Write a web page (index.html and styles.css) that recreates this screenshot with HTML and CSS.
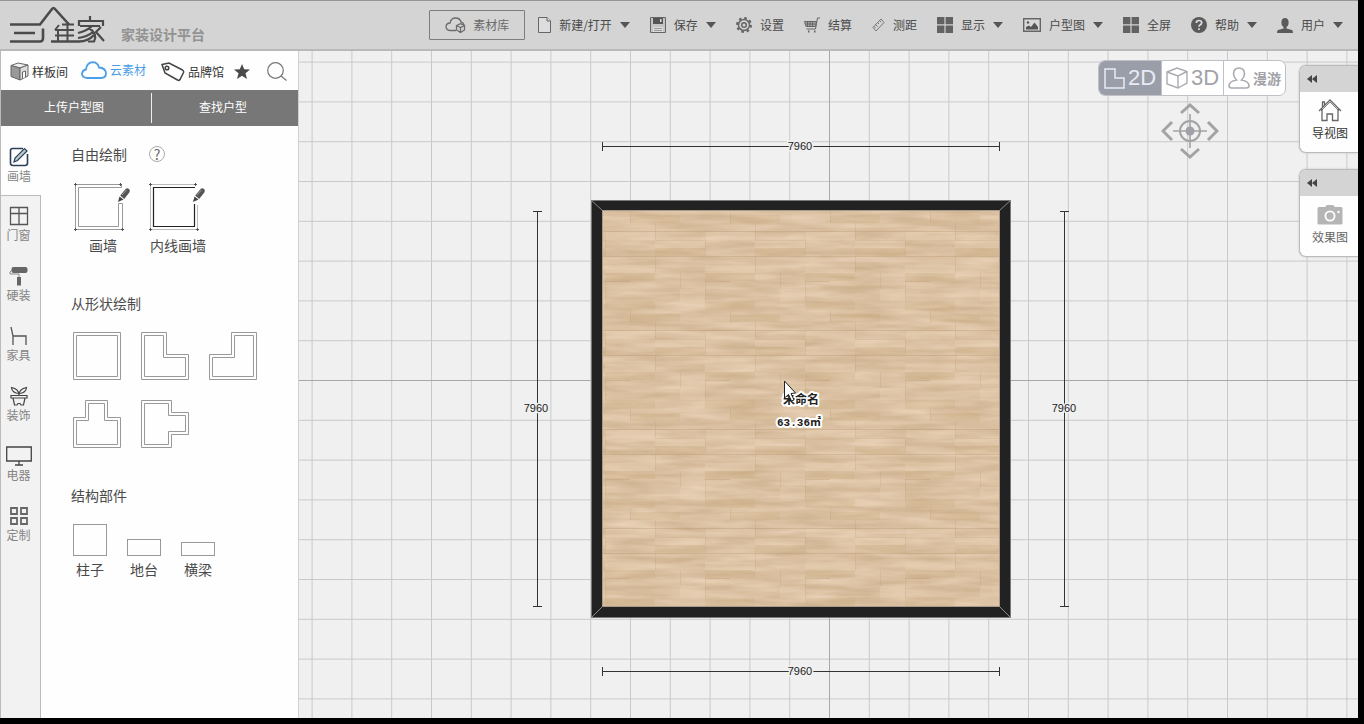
FILE: index.html
```html
<!DOCTYPE html>
<html lang="zh-CN">
<head>
<meta charset="utf-8">
<title>三维家 家装设计平台</title>
<link rel="stylesheet" href="styles.css">
</head>
<body>
<svg class="defs" width="0" height="0" aria-hidden="true">
  <symbol id="caret" viewBox="0 0 10 6"><path d="M0 0H10L5 6Z" fill="#555"/></symbol>
  <symbol id="four" viewBox="0 0 16 16"><path d="M0 0H7.4V7.2H0ZM8.6 0H16V7.2H8.6ZM0 8.6H7.4V16H0ZM8.6 8.6H16V16H8.6Z" fill="#626262"/></symbol>
  <symbol id="rewind" viewBox="0 0 11 8"><path d="M0 4L5 0V8ZM5 4L10 0V8Z" fill="#444"/></symbol>
  <symbol id="pencil" viewBox="0 0 12 14"><path d="M0 14L1.5 8.5L5.5 11.5Z" fill="#444"/><path d="M2.2 7.6L7.6 1Q9.5-.6 11 1Q12.400 2.400 11.300 4.400L6.200 11Z" fill="#555"/><path d="M4 7L8.500 2" stroke="#999"/></symbol>
</svg>
<div class="app">
  <header class="topbar">
    <a class="brand" href="#" aria-label="三维家">
      <svg width="97" height="38" viewBox="0 0 97 38" fill="none" stroke="#4b4b4b" stroke-width="2.600">
        <path d="M1 18.500H31L43 3Q44.500 1 46 3L60 18.500"/>
        <path d="M5 27H26M1 35.500H31Q34 35.500 34 32V22.500"/>
        <path d="M42 35.500H70Q79 35.500 85 29" stroke-width="2.500"/>
        <path d="M53 18.500H65M46 24H65M46 29.500H65M58.500 16V35M50 19L46 24M49 24V35" stroke-width="2"/>
        <path d="M81 10V14M70 20V15H94V20M71 20H91M83 20Q78 25 69 27M80 22Q89 28 85 35.500H79M84 26Q78 31 69 32M92 21L87 26L95 35" stroke-width="2.200"/>
      </svg>
      <span class="slogan">家装设计平台</span>
    </a>
    <nav class="menu">
      <button class="library">
        <svg width="21" height="17" viewBox="0 0 21 17" fill="none" stroke="#6b6b6b" stroke-width="1.300"><path d="M11 13.500H5Q1 13 1 9.500Q1.500 6 5 6Q6 1 10.500 1Q15 1 16 5Q18.500 5.500 19 8"/><path d="M11.500 8.500L15.500 6.700L19.500 8.500V13L15.500 15.500L11.500 13ZM11.500 8.500L15.500 10.500L19.500 8.500M15.500 10.500V15.500"/></svg>
        素材库</button>
      <button class="item first">
        <svg width="13" height="17" viewBox="0 0 13 17" fill="#ddd" stroke="#666"><path d="M.5.5H9L12.500 4V15.500H.5Z"/><path d="M9 .5V4H12.500"/></svg>
        新建/打开<svg class="caret"><use href="#caret"/></svg></button>
      <button class="item">
        <svg width="16" height="16" viewBox="0 0 16 16"><path d="M.5.5H15.500V15.500H.5Z" fill="#c5c5c5" stroke="#666"/><path d="M3 1H13V7H3Z" fill="#555"/><path d="M10 2h1.500v3H10Z" fill="#ddd"/><path d="M3 10H13V15H3Z" fill="#ddd"/><path d="M4 11.500H12M4 13.500H12" stroke="#999"/></svg>
        保存<svg class="caret"><use href="#caret"/></svg></button>
      <button class="item">
        <svg width="16" height="16" viewBox="0 0 16 16" fill="none" stroke="#666"><circle cx="8" cy="8" r="7" stroke-width="2" stroke-dasharray="2.700 2.800"/><circle cx="8" cy="8" r="5.500" stroke-width="1.500"/><circle cx="8" cy="8" r="2.300" stroke-width="1.500"/></svg>
        设置</button>
      <button class="item">
        <svg width="16" height="16" viewBox="0 0 16 16" fill="none" stroke="#666"><path d="M16 1H13.500L11.500 12H2.500"/><path d="M.5 4.500H12.500L11.500 9.500H2Z" fill="#aaa"/><path d="M3.500 5V9M6 5V9M8.500 5V9M1 7H12"/><path d="M4 14.500H5.500M10 14.500H11.500" stroke-width="2"/></svg>
        结算</button>
      <button class="item">
        <svg width="13" height="14" viewBox="0 0 13 14" fill="none" stroke="#777"><path d="M9 1L12 4.500L4 13L1 9.500ZM7.500 2.500L9 4M5.500 4.500L7 6M3.500 6.500L5.500 8.500M2 8.500L3.500 10"/></svg>
        测距</button>
      <button class="item">
        <svg width="16" height="16"><use href="#four"/></svg>
        显示<svg class="caret"><use href="#caret"/></svg></button>
      <button class="item">
        <svg width="18" height="14" viewBox="0 0 18 14"><path d="M.7.7H17.300V13.300H.7Z" fill="#d8d8d8" stroke="#666" stroke-width="1.400"/><path d="M3 11.500V9L6 7.500L8 9L11.500 4.500L15 9V11.500Z" fill="#555"/><circle cx="5" cy="4.500" r="1.200" fill="#555"/></svg>
        户型图<svg class="caret"><use href="#caret"/></svg></button>
      <button class="item">
        <svg width="16" height="16"><use href="#four"/></svg>
        全屏</button>
      <button class="item">
        <svg width="16" height="16" viewBox="0 0 16 16"><circle cx="8" cy="8" r="8" fill="#5a5a5a"/><path d="M5.300 6Q5.300 3.500 8 3.500Q10.700 3.500 10.700 5.700Q10.700 7 9 8Q8 8.500 8 9.800M8 11.200V13" fill="none" stroke="#ddd" stroke-width="1.700"/></svg>
        帮助<svg class="caret"><use href="#caret"/></svg></button>
      <button class="item">
        <svg width="16" height="15" viewBox="0 0 16 15" fill="#5a5a5a"><ellipse cx="8" cy="4.500" rx="3.600" ry="4.500"/><path d="M6.500 8H9.500V10.500L15 12Q16 12.500 16 15H0Q0 12.500 1 12L6.500 10.500Z"/></svg>
        用户<svg class="caret"><use href="#caret"/></svg></button>
    </nav>
  </header>

  <main class="work">
    <aside class="side">
      <nav class="sources">
        <button class="source"><svg width="19" height="19" viewBox="0 0 19 19" stroke="#666"><path d="M1 3.500L8 1L18 3L10 6Z" fill="#eee"/><path d="M1 3.500L10 6V18L1 14.500Z" fill="#999"/><path d="M10 6L18 3V14L10 18Z" fill="#ddd"/><path d="M12.500 16.500V10L15.500 9V15" fill="#fff"/></svg>样板间</button>
        <button class="source cloud"><svg width="26" height="19" viewBox="0 0 26 19" fill="none" stroke="#4b9fe8" stroke-width="1.800"><path d="M6 17Q1 16.500 1 12.500Q1.500 9 5 8.500Q5.500 2 11.500 1.200Q16.500 1.200 18 6.500Q24.500 7 25 12Q25 17 20 17Z"/></svg>云素材</button>
        <button class="source brandhall"><svg width="24" height="20" viewBox="0 0 24 20" fill="none" stroke="#444" stroke-width="1.500"><path d="M1 2.500L8 1L21.500 8Q23 9 22.500 10.500L19 17.500Q18 19 16.500 18L4 11Z"/><circle cx="6" cy="6" r="1.800"/></svg>品牌馆</button>
        <button class="source" aria-label="收藏"><svg width="16" height="15" viewBox="0 0 16 15"><path d="M8 0L10.200 5.200L16 5.500L11.500 9.200L13 15L8 11.700L3 15L4.500 9.200L0 5.500L5.800 5.200Z" fill="#4a4a4a"/></svg></button>
        <button class="source search" aria-label="搜索"><svg width="20" height="19" viewBox="0 0 20 19" fill="none" stroke="#777" stroke-width="1.200"><circle cx="8.500" cy="8.500" r="7.800"/><path d="M14 14L19.500 18.500"/></svg></button>
      </nav>
      <div class="plan-actions">
        <button>上传户型图</button>
        <button>查找户型</button>
      </div>
      <div class="columns">
        <nav class="tools">
          <button class="tool active"><svg width="20" height="20" viewBox="0 0 20 20" fill="none" stroke="#2a4157" stroke-width="1.600"><path d="M14 1.500H3.500Q1.500 1.500 1.500 3.500V16Q1.500 18.500 4 18.500H16Q18.500 18.500 18.500 16V7"/><path d="M5 15L6 11L15.500 1.500L18 4L8.500 13.500Z" fill="#bcc" stroke-width="1.200"/></svg>画墙</button>
          <button class="tool"><svg width="20" height="20" viewBox="0 0 20 20" fill="none" stroke="#555" stroke-width="1.300"><path d="M1.500 1.500H18.500V18.500H1.500ZM10 1.500V18.500M1.500 7.500H18.500"/></svg>门窗</button>
          <button class="tool"><svg width="20" height="20" viewBox="0 0 20 20"><rect x="2.500" y="1" width="16" height="6" rx="2" fill="#666"/><path d="M3 4L1 6V8H10V11" fill="none" stroke="#888"/><path d="M8 11H12V19.500H8Z" fill="#666"/></svg>硬装</button>
          <button class="tool"><svg width="20" height="20" viewBox="0 0 20 20" fill="none" stroke="#555" stroke-width="1.300"><path d="M2 1L4 10V19M4 10H17V19"/></svg>家具</button>
          <button class="tool"><svg width="20" height="20" viewBox="0 0 20 20" fill="none" stroke="#444" stroke-width="1.200"><path d="M10 9Q10 3 2.500 1.500Q3 7 10 7.500Q17 7 17.500 1.500Q10 3 10 9M2 9.500H18V12H2ZM4 12L5.500 19H8L9 17.500H11L12 19H14.500L16 12"/></svg>装饰</button>
          <button class="tool"><svg width="26" height="20" viewBox="0 0 26 20" fill="none" stroke="#444" stroke-width="1.300"><path d="M.7 1H25.300V15H.7ZM13 15V18.500M9 19H17"/></svg>电器</button>
          <button class="tool"><svg width="20" height="20" viewBox="0 0 20 20" fill="none" stroke="#666" stroke-width="1.800"><path d="M2 2H8V8H2ZM12 2H18V8H12ZM2 12H8V18H2ZM12 12H18V18H12Z"/></svg>定制</button>
        </nav>
        <section class="panel">
          <div class="group free">
            <h2>自由绘制 <button class="hint" aria-label="说明">?</button></h2>
            <div class="draws">
              <button class="draw">
                <svg width="58" height="50" viewBox="0 0 58 50" fill="none" stroke="#999"><path d="M47.500 1.500V4.500H4.500V43.500H44.500V20.500H48.500V46.500H1.500V1.500Z"/><path d="M0 1.500H3M1.500 0V3M0 46.500H3M1.500 45V48M47 46.500H50M48.500 45V48M45 1.500H48M46.500 0V3" stroke="#555"/><use href="#pencil" x="44" y="5" width="12" height="14" stroke="none"/></svg>
                画墙</button>
              <button class="draw">
                <svg width="58" height="50" viewBox="0 0 58 50" fill="none" stroke="#bbb"><path d="M46 1.500H1.500V46.500H48.500V22"/><path d="M46 4.500H4.500V43.500H45.500V21" stroke="#222" stroke-width="1.200"/><path d="M0 1.500H3M1.500 0V3M0 46.500H3M1.500 45V48M47 46.500H50M48.500 45V48M45 1.500H48M46.500 0V3" stroke="#555"/><use href="#pencil" x="44" y="5" width="12" height="14" stroke="none"/></svg>
                内线画墙</button>
            </div>
          </div>
          <div class="group shape">
            <h2>从形状绘制</h2>
            <div class="shapes">
              <button aria-label="方形"><svg width="48" height="48" viewBox="0 0 48 48"><path d="M.5.5H47.500V47.500H.5ZM3.500 3.500H44.500V44.500H3.500Z"/></svg></button>
              <button aria-label="L形"><svg width="48" height="48" viewBox="0 0 48 48"><path d="M.5.5H25.500V22.500H47.500V47.500H.5ZM3.500 3.500H22.500V25.500H44.500V44.500H3.500Z"/></svg></button>
              <button aria-label="反L形"><svg width="48" height="48" viewBox="0 0 48 48"><path d="M47.500.5H22.500V22.500H.5V47.500H47.500ZM44.500 3.500H25.500V25.500H3.500V44.500H44.500Z"/></svg></button>
              <button aria-label="凸形"><svg width="48" height="48" viewBox="0 0 48 48"><path d="M12.500.5H34.500V17.500H47.500V47.500H.5V17.500H12.500ZM15.500 3.500H31.500V20.500H44.500V44.500H3.500V20.500H15.500Z"/></svg></button>
              <button aria-label="T形"><svg width="48" height="48" viewBox="0 0 48 48"><path d="M.5.5H30.500V12.500H47.500V34.500H30.500V47.500H.5ZM3.500 3.500H27.500V15.500H44.500V31.500H27.500V44.500H3.500Z"/></svg></button>
            </div>
          </div>
          <div class="group">
            <h2>结构部件</h2>
            <div class="parts">
              <button><span class="part pillar"></span>柱子</button>
              <button><span class="part deck"></span>地台</button>
              <button><span class="part beam"></span>横梁</button>
            </div>
          </div>
        </section>
      </div>
    </aside>

    <section class="stage">
      <svg class="plan" viewBox="299 51 1059 667" preserveAspectRatio="xMidYMid slice">
        <defs>
          <pattern id="grid" x="829" y="380" width="39.800" height="39.800" patternUnits="userSpaceOnUse"><path d="M.5 0V39.800M0 .5H39.800" stroke="#c9c9c9" fill="none"/></pattern>
          <pattern id="planks" x="605" y="211" width="100" height="99" patternUnits="userSpaceOnUse">
            <path d="M0 20.500H100M0 45.500H100M50 29.500H100M0 70.500H25" stroke="#b28f68" stroke-opacity=".3" fill="none"/>
            <path d="M50.500 12V29M.5 20V45M25.500 0V12M50.500 45V62M75.500 62V78M.5 70V90" stroke="#b28f68" stroke-opacity=".2" fill="none"/>
            <path d="M0 21H50V29H0ZM50 29H100V37H50ZM0 54H50V62H0ZM75 78H100V90H75Z" fill="#ecd6ba" fill-opacity=".3"/>
            <path d="M25 4H75V12H25ZM50 37H100V45H50ZM0 62H50V70H0ZM0 90H50V99H0Z" fill="#c0a070" fill-opacity=".18"/>
          </pattern>
          <filter id="grain" x="0" y="0" width="1" height="1" color-interpolation-filters="sRGB">
            <feTurbulence type="fractalNoise" baseFrequency=".018 .14" numOctaves="3" seed="6"/>
            <feColorMatrix values=".14 0 0 0 .788  .16 0 0 0 .677  .2 0 0 0 .536  0 0 0 0 1"/>
          </filter>
        </defs>
        <rect x="299" y="51" width="1059" height="667" fill="#f0f0f0"/>
        <rect x="299" y="51" width="1059" height="667" fill="url(#grid)"/>
        <path d="M829.500 51V718M299 380.500H1358" stroke="#a8a8a8"/>
        <rect x="591" y="200" width="420" height="418" fill="#222"/>
        <rect x="591.500" y="200.500" width="419" height="417" fill="none" stroke="#777"/>
        <path d="M591 200L603 211M1011 200L999 211M591 618L603 606M1011 618L999 606" stroke="#888"/>
        <rect x="603" y="211" width="396" height="395" fill="#dbc1a1"/>
        <rect x="603" y="211" width="396" height="395" filter="url(#grain)"/>
        <rect x="603" y="211" width="396" height="395" fill="url(#planks)"/>
        <rect x="602.500" y="210.500" width="397" height="396" fill="none" stroke="#a99c8b"/>
        <g stroke="#333" fill="none"><path d="M602.500 146.500H999.500M602.500 142V151M999.500 142V151M602.500 671.500H999.500M602.500 667V676M999.500 667V676M537.500 211.500V606.500M533 211.500H542M533 606.500H542M1064.500 211.500V606.500M1060 211.500H1069M1060 606.500H1069"/></g>
        <g class="dims">
          <text x="800" y="150">7960</text><text x="800" y="675">7960</text><text x="536" y="412">7960</text><text x="1064" y="412">7960</text>
        </g>
        <g class="room">
          <text x="801" y="404">未命名</text><text class="area" x="799" y="426">63.36㎡</text>
        </g>
        <path d="M784.500 381L784.500 398L788.500 394.500L791.500 401L794 400L791 393.500L795.500 393Z" fill="#fff" stroke="#222"/>
      </svg>

      <div class="view">
        <button class="on"><svg width="21" height="21" viewBox="0 0 21 21" fill="none" stroke="#e8ebf5" stroke-width="1.500"><path d="M1 1H11V10H20V20H1Z"/></svg>2D</button>
        <button><svg width="22" height="22" viewBox="0 0 22 22" fill="none" stroke="#aaaab0" stroke-width="1.400"><path d="M1 5L11 1L21 4.500V16L12 21L1 17ZM1 5L12 9L21 4.500M12 9V21"/></svg>3D</button>
        <button class="roam"><svg width="22" height="22" viewBox="0 0 22 22" fill="none" stroke="#aaaab0" stroke-width="1.600"><path d="M8.500 13Q5.500 10 5.500 6.500Q6 1 11 1Q16 1 16.500 6.500Q16.500 10 13.500 13Q21 14.500 21 18.500Q21 21 18.500 21H3.500Q1 21 1 18.500Q1 14.500 8.500 13Z"/></svg>漫游</button>
      </div>
      <button class="compass" aria-label="平移"><svg width="58" height="58" viewBox="0 0 58 58" fill="none" stroke="#a3a3a6" stroke-width="3"><path d="M20 11L29 3L38 11M20 47L29 55L38 47M11 20L2 29L11 38M47 20L56 29L47 38"/><circle cx="29" cy="29" r="10" stroke-width="2"/><path d="M29 12V46M12 29H46" stroke-width="1.600"/><circle cx="29" cy="29" r="4.500" fill="#a0a0a8" stroke="none"/></svg></button>
      <div class="docks">
        <section class="dock">
          <button class="fold" aria-label="展开导视图"><svg width="11" height="8"><use href="#rewind"/></svg></button>
          <button class="open"><svg width="24" height="23" viewBox="0 0 24 23" fill="none" stroke="#666" stroke-width="1.300"><path d="M1 12L12 1L23 12M4 10V21.500H9V15H14.500V21.500H20V10M4.500 8V3H6.500V6"/><path d="M3 12L12 3L21 12" stroke-width=".8"/></svg>导视图</button>
        </section>
        <section class="dock muted">
          <button class="fold" aria-label="展开效果图"><svg width="11" height="8"><use href="#rewind"/></svg></button>
          <button class="open"><svg width="26" height="23" viewBox="0 0 26 23"><path d="M2 4H8L10 2H16L18 4H24Q25.500 4 25.500 5.500V20Q25.500 21.500 24 21.500H2Q.5 21.500.5 20V5.500Q.5 4 2 4Z" fill="#b5b5b5"/><circle cx="13" cy="13" r="4.600" fill="none" stroke="#fff" stroke-width="1.800"/><circle cx="21.500" cy="9" r="1.200" fill="#fff"/></svg>效果图</button>
        </section>
      </div>
    </section>
  </main>
</div>
</body>
</html>
```
FILE: styles.css
```css
* { box-sizing: border-box; }
body {
  margin: 0;
  height: 100vh;
  padding: 0 6px 6px 0;
  background: #000;
  color: #4a4a4a;
  font: 12px/16px "Noto Sans CJK SC", sans-serif;
}
button {
  margin: 0;
  padding: 0;
  border: 0;
  background: none;
  color: inherit;
  font: inherit;
  cursor: pointer;
}
svg { display: block; flex: none; }
.defs { position: absolute; }
.app { display: flex; flex-direction: column; height: 100%; }

/* Top bar */
.topbar {
  display: flex;
  justify-content: space-between;
  height: 51px;
  flex: none;
  padding: 0 15px 0 9px;
  background: #d4d4d4;
  border-top: 1px solid #959595;
  border-bottom: 2px solid #b9b9b9;
}
.brand { display: flex; gap: 15px; padding-top: 5px; text-decoration: none; }
.slogan { padding-top: 19px; color: #929292; font-size: 14px; line-height: 18px; font-weight: 700; }
.menu { display: flex; align-items: center; white-space: nowrap; }
.library {
  display: flex;
  align-items: center;
  justify-content: center;
  gap: 7px;
  width: 96px;
  height: 30px;
  border: 1px solid #7d7d7d;
  border-radius: 1px;
  color: #6b6b6b;
}
.item { display: flex; align-items: center; gap: 8px; margin-left: 20px; }
.item.first { margin-left: 13px; }
.caret { width: 10px; height: 6px; }

/* Left side */
.work { display: flex; flex: 1; min-height: 0; }
.side {
  display: flex;
  flex-direction: column;
  width: 299px;
  flex: none;
  background: #fefefe;
  border-right: 1px solid #d0d0d0;
  border-left: 1px solid #bbb;
}
.sources { display: flex; align-items: center; height: 39px; padding: 2px 9px 0; }
.source { display: flex; align-items: center; gap: 4px; color: #333; }
.source:first-child { gap: 3px; }
.cloud { gap: 3px; margin-left: 13px; padding-bottom: 3px; color: #4b9fe8; }
.brandhall { gap: 3px; margin: 0 10px 0 15px; }
.search { margin-left: 17px; }
.plan-actions {
  display: grid;
  grid-template-columns: 151px 1fr;
  height: 36px;
  padding: 3px 0;
  background: #777;
  color: #fff;
}
.plan-actions button { padding: 0 4px 2px 0; }
.plan-actions button:first-child { border-right: 1px solid #eee; }
.columns { display: flex; flex: 1; }
.tools { display: flex; flex-direction: column; width: 40px; background: #f2f2f2; border-right: 1px solid #bbb; }
.tool {
  display: flex;
  flex-direction: column;
  align-items: center;
  gap: 1px;
  height: 60px;
  padding: 10px 4px 0 0;
  color: #858585;
}
.tool.active {
  width: 40px;
  height: 70px;
  padding-top: 21px;
  background: #fefefe;
  border-bottom: 1px solid #bbb;
}
.panel { padding: 19px 0 0 30px; }
h2 { display: flex; align-items: center; gap: 22px; height: 18px; margin: 0; font-size: 14px; font-weight: 400; line-height: 18px; }
.hint { width: 16px; height: 16px; border: 1px solid #aaa; border-radius: 50%; color: #666; line-height: 14px; }
.group { font-size: 14px; line-height: 18px; }
.free { height: 149px; }
.shape { height: 192px; }
.draws { display: flex; gap: 17px; margin-top: 20px; padding-left: 3px; }
.draw { display: flex; flex-direction: column; align-items: center; gap: 3px; width: 58px; white-space: nowrap; }
.shapes { display: grid; grid-template-columns: repeat(3, 48px); gap: 20px; margin: 20px 0 0 2px; }
.shapes path { fill: none; stroke: #999; }
.parts { display: flex; align-items: flex-end; gap: 20px; margin: 20px 0 0 2px; }
.parts button { display: flex; flex-direction: column; align-items: center; gap: 4px; }
.part { width: 34px; border: 1px solid #999; }
.pillar { height: 32px; }
.deck { height: 17px; }
.beam { height: 14px; }

/* Drawing stage and what floats over it */
.stage { position: relative; flex: 1; min-width: 0; overflow: hidden; background: #f0f0f0; }
.plan { width: 100%; height: 100%; }
.plan text { text-anchor: middle; paint-order: stroke; }
.dims { fill: #222; stroke: #f0f0f0; stroke-width: 3px; font: 11px "Liberation Sans", sans-serif; }
.room { fill: #222; stroke: #fff; stroke-width: 4px; stroke-linejoin: round; font: 700 12px "Noto Sans CJK SC", sans-serif; }
.area { font: 700 11px "Liberation Mono", "Noto Sans CJK SC", monospace; }
.view {
  position: absolute;
  top: 9px;
  right: 72px;
  display: flex;
  height: 36px;
  border: 1px solid #c0c0c6;
  border-radius: 7px;
  overflow: hidden;
  background: #fff;
  color: #a2a2a8;
  font: 22px "Liberation Sans", sans-serif;
}
.view button { display: flex; align-items: center; justify-content: center; gap: 3px; width: 62px; }
.view button + button { border-left: 1px solid #c0c0c6; }
.view .on { background: #9a9ea8; color: #e8ebf5; }
.view .roam { font: 700 14px "Noto Sans CJK SC", sans-serif; }
.compass { position: absolute; top: 51px; right: 139px; }
.docks { position: absolute; top: 14px; right: 0; display: flex; flex-direction: column; gap: 16px; width: 59px; }
.dock {
  border: 1px solid #bbb;
  border-right: 0;
  border-radius: 7px 0 0 7px;
  overflow: hidden;
  background: #fefefe;
  box-shadow: 0 0 2px #bbb;
}
.fold { display: flex; align-items: center; width: 100%; height: 26px; padding-left: 7px; background: #d4d4d4; }
.open { display: flex; flex-direction: column; align-items: center; gap: 3px; width: 100%; height: 60px; padding: 7px 0 0 2px; color: #333; }
.muted .open { color: #666; }
```
